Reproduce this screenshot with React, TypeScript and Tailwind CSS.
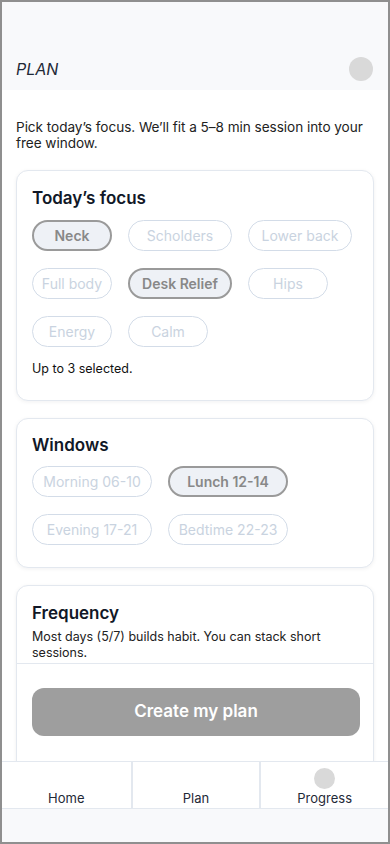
import React from 'react';

type Chip = { label: string; width: string; selected?: boolean };

const focusChips: Chip[] = [
  { label: 'Neck', width: 'w-[80px]', selected: true },
  { label: 'Scholders', width: 'w-[104px]' },
  { label: 'Lower back', width: 'w-[104px]' },
  { label: 'Full body', width: 'w-[80px]' },
  { label: 'Desk Relief', width: 'w-[104px]', selected: true },
  { label: 'Hips', width: 'w-[80px]' },
  { label: 'Energy', width: 'w-[80px]' },
  { label: 'Calm', width: 'w-[80px]' },
];

const windowChips: Chip[] = [
  { label: 'Morning 06-10', width: 'w-[120px]' },
  { label: 'Lunch 12-14', width: 'w-[120px]', selected: true },
  { label: 'Evening 17-21', width: 'w-[120px]' },
  { label: 'Bedtime 22-23', width: 'w-[120px]' },
];

const ChipButton: React.FC<{ chip: Chip }> = ({ chip }) => (
  <button
    className={
      chip.selected
        ? `${chip.width} h-[31px] rounded-full border-2 border-[#9a9a9a] bg-[#eef1f6] text-[14px] font-semibold text-[#888]`
        : `${chip.width} h-[31px] rounded-full border border-[#d3dce8] bg-white text-[14px] text-[#c9d3e0]`
    }
  >
    {chip.label}
  </button>
);

const Card: React.FC<{ className?: string; children: React.ReactNode }> = ({ className = '', children }) => (
  <div className={`rounded-xl border border-[#e3e8ef] bg-white px-[15px] shadow-[0_1px_4px_rgba(15,23,42,0.06)] ${className}`}>
    {children}
  </div>
);

const App: React.FC = () => {
  return (
    <div
      className="flex h-[844px] w-[390px] flex-col overflow-hidden border-2 border-[#8f8f8f] bg-white text-[#1f2937]"
      style={{ fontFamily: 'Inter, "Noto Sans", sans-serif' }}
    >
      {/* Header */}
      <header className="flex h-[88px] shrink-0 items-end justify-between bg-[#f8f9fb] pb-[9px] pl-[14px] pr-[15px]">
        <span className="text-[16px] italic leading-6 text-[#1f2937]">PLAN</span>
        <div className="h-6 w-6 rounded-full bg-[#d9d9d9]" />
      </header>

      {/* Scroll area */}
      <main className="relative h-[671px] shrink-0 overflow-hidden">
        <div className="flex flex-col px-[14px] pt-[29px]">
          <p className="text-[13.6px] leading-4 tracking-[-0.05px] text-[#222]">
            Pick today’s focus. We’ll fit a 5–8 min session into your free window.
          </p>

          <div className="mt-[19px] flex flex-col gap-[17px]">
            {/* Today's focus */}
            <Card className="pb-[23px] pt-4">
              <h2 className="text-[17px] font-semibold leading-[22px] text-[#111827]">Today’s focus</h2>
              <div className="mt-[11px] flex flex-wrap gap-x-4 gap-y-[17px]">
                {focusChips.map((c) => (
                  <ChipButton key={c.label} chip={c} />
                ))}
              </div>
              <p className="mt-[14px] text-[12.5px] leading-4 text-[#111]">Up to 3 selected.</p>
            </Card>

            {/* Windows */}
            <Card className="pb-[22px] pt-[15px]">
              <h2 className="text-[17px] font-semibold leading-[22px] text-[#111827]">Windows</h2>
              <div className="mt-[10px] flex w-[256px] flex-wrap gap-x-4 gap-y-[17px]">
                {windowChips.map((c) => (
                  <ChipButton key={c.label} chip={c} />
                ))}
              </div>
            </Card>

            {/* Frequency */}
            <Card className="pb-6 pt-4">
              <h2 className="text-[17px] font-semibold leading-[22px] text-[#111827]">Frequency</h2>
              <p className="mt-[5px] text-[12.5px] leading-4 text-[#222]">
                Most days (5/7) builds habit. You can stack short sessions.
              </p>
              <div className="mt-4 flex gap-2">
                {['3/7', '5/7', '7/7'].map((f) => (
                  <span key={f} className="rounded-full border border-[#d3dce8] px-4 py-1 text-[14px] text-[#c9d3e0]">
                    {f}
                  </span>
                ))}
              </div>
              <div className="h-24" />
            </Card>
          </div>
        </div>

        {/* Sticky CTA */}
        <div className="absolute bottom-0 left-[15px] right-[15px] h-[98px] border-t border-[#e3e8ef] bg-white pl-[15px] pr-[13px] pt-6">
          <button className="h-12 w-full rounded-xl bg-[#9e9e9e] text-[17px] font-semibold text-white">
            Create my plan
          </button>
        </div>
      </main>

      {/* Bottom nav */}
      <nav className="grid h-[48px] shrink-0 grid-cols-3 border-y border-[#e3e8ef] bg-white">
        <div className="flex flex-col items-center justify-end pb-[2px]">
          <span className="text-[13px] leading-4 text-[#1f2937]">Home</span>
        </div>
        <div className="flex flex-col items-center justify-end border-l-2 border-[#e3e8ef] pb-[2px]">
          <span className="text-[13px] leading-4 text-[#1f2937]">Plan</span>
        </div>
        <div className="flex flex-col items-center justify-end border-l-2 border-[#e3e8ef] pb-[2px]">
          <div className="mb-[1px] h-[21px] w-[21px] rounded-full bg-[#d9d9d9]" />
          <span className="text-[13px] leading-4 text-[#1f2937]">Progress</span>
        </div>
      </nav>

      <div className="flex-1 bg-[#f8f9fb]" />
    </div>
  );
};

export default App;
